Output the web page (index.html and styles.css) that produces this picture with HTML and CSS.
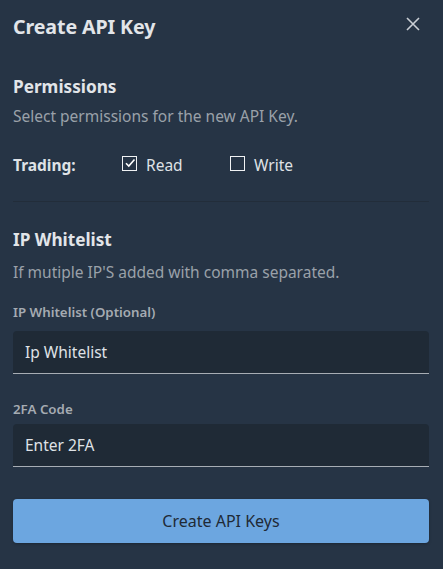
FILE: index.html
```html
<!DOCTYPE html>
<html>
<head>
<meta charset="utf-8">
<link rel="stylesheet" href="styles.css">
</head>
<body>
<div class="modal">
  <header class="head">
    <h1 class="title">Create API Key</h1>
    <button class="close" aria-label="Close">
      <svg width="14" height="14" viewBox="0 0 14 14"><path d="M1 1L13 13M13 1L1 13" stroke="#c9ced4" stroke-width="1.6" fill="none"/></svg>
    </button>
  </header>

  <section class="perm">
    <h2 class="sec-title">Permissions</h2>
    <p class="desc">Select permissions for the new API Key.</p>
    <div class="trade-row">
      <span class="trade-label">Trading:</span>
      <label class="check">
        <span class="box">
          <svg width="12" height="12" viewBox="0 0 12 12"><path d="M2 6.2L4.8 9L10.5 2.5" stroke="#fff" stroke-width="1.6" fill="none"/></svg>
        </span>
        <span>Read</span>
      </label>
      <label class="check">
        <span class="box"></span>
        <span>Write</span>
      </label>
    </div>
  </section>

  <hr class="divider">

  <section class="ip">
    <h2 class="sec-title">IP Whitelist</h2>
    <p class="desc">If mutiple IP'S added with comma separated.</p>
    <div class="field">
      <div class="label">IP Whitelist (Optional)</div>
      <div class="input">Ip Whitelist</div>
    </div>
    <div class="field">
      <div class="label">2FA Code</div>
      <div class="input">Enter 2FA</div>
    </div>
  </section>

  <button class="submit">Create API Keys</button>
</div>
</body>
</html>
```
FILE: styles.css
```css
* { box-sizing: border-box; }
html, body {
  margin: 0;
  padding: 0;
  background: #263445;
}
body {
  font-family: "Noto Sans", "Open Sans", sans-serif;
  color: #e6e8eb;
}
.modal {
  width: 443px;
  height: 569px;
  padding: 0 14px 0 13px;
  display: flex;
  flex-direction: column;
}
.head {
  display: flex;
  justify-content: space-between;
  align-items: center;
  height: 54px;
  padding-bottom: 2px;
}
.title {
  margin: 0;
  font-size: 19.6px;
  font-weight: 700;
  color: #e2e5e9;
  letter-spacing: -0.1px;
}
.close {
  background: none;
  border: 0;
  padding: 0;
  margin-right: 9px;
  width: 14px;
  height: 14px;
  display: flex;
  margin-top: -4px;
}
.perm {
  padding-top: 21px;
}
.sec-title {
  margin: 0;
  font-size: 17.2px;
  font-weight: 700;
  color: #e2e5e9;
  line-height: 24px;
}
.desc {
  margin: 6px 0 0;
  font-size: 15.5px;
  color: #9aa1a9;
  line-height: 22px;
}
.trade-row {
  display: flex;
  align-items: center;
  margin-top: 26px;
  height: 24px;
  font-size: 15.5px;
}
.trade-label {
  font-weight: 700;
  width: 109px;
  color: #dfe2e6;
}
.check {
  display: flex;
  align-items: center;
  gap: 9px;
  width: 108px;
  color: #dfe2e6;
}
.box {
  width: 15px;
  height: 15px;
  border: 1.5px solid #f0f2f4;
  display: flex;
  align-items: center;
  justify-content: center;
  margin-top: -4px;
}
.divider {
  border: 0;
  border-top: 1px solid #222d3a;
  margin: 24px 0 0;
}
.ip {
  padding-top: 26px;
}
.ip .desc {
  margin-top: 9px;
}
.field {
  margin-top: 20px;
}
.field + .field {
  margin-top: 26px;
}
.label {
  font-size: 13.3px;
  font-weight: 600;
  color: #a5abb2;
  line-height: 18px;
}
.input {
  margin-top: 10px;
  height: 43px;
  background: #1f2a36;
  border-radius: 4px 4px 0 0;
  border-bottom: 1px solid #a7adb4;
  padding: 0 12px;
  display: flex;
  align-items: center;
  font-size: 15.5px;
  color: #dfe2e6;
}
.field + .field .input {
  margin-top: 6px;
}
.submit {
  margin-top: 32px;
  height: 44px;
  width: 100%;
  border: 0;
  border-radius: 4px;
  background: #6ca6e0;
  color: #1f2a36;
  font-family: "Noto Sans", sans-serif;
  font-size: 16px;
  box-shadow: 0 1px 3px rgba(0,0,0,0.25);
}
```
